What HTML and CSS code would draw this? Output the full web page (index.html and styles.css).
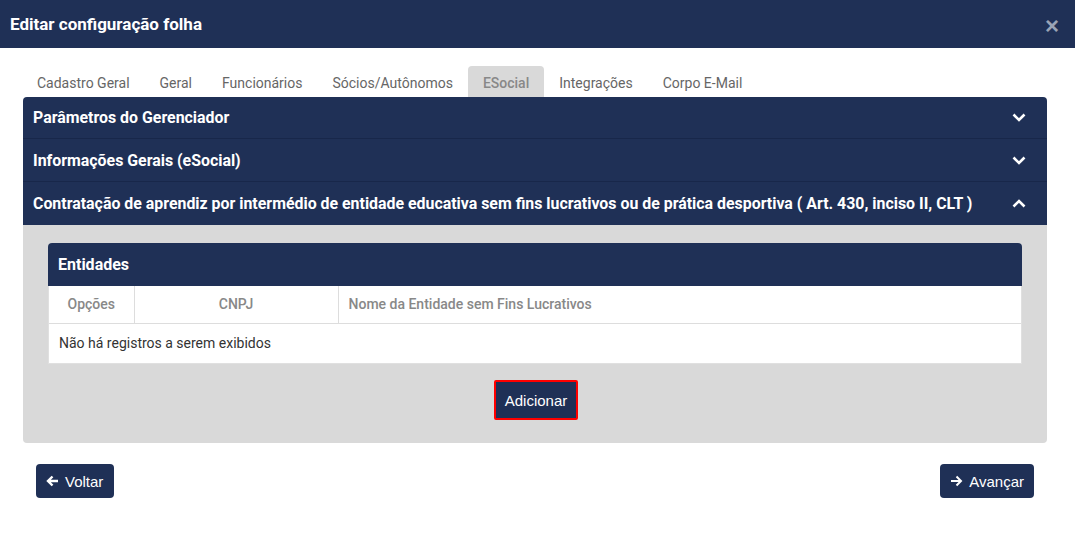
FILE: index.html
```html
<!DOCTYPE html>
<html lang="pt">
<head>
<meta charset="utf-8">
<title>Editar configuração folha</title>
<link rel="stylesheet" href="styles.css">
</head>
<body>
<div class="modal">
  <div class="modal-header">
    <h1 class="modal-title">Editar configuração folha</h1>
    <span class="close">&times;</span>
  </div>
  <div class="modal-body">
    <ul class="tabs">
      <li class="tab">Cadastro Geral</li>
      <li class="tab">Geral</li>
      <li class="tab">Funcionários</li>
      <li class="tab">Sócios/Autônomos</li>
      <li class="tab active">ESocial</li>
      <li class="tab">Integrações</li>
      <li class="tab">Corpo E-Mail</li>
    </ul>
    <div class="accordion">
      <div class="acc-head">
        <span>Parâmetros do Gerenciador</span>
        <svg class="chev" width="14" height="9" viewBox="0 0 14 9"><path d="M1.5 1.5 L7 7 L12.5 1.5" fill="none" stroke="#fff" stroke-width="2.6"/></svg>
      </div>
      <div class="acc-head">
        <span>Informações Gerais (eSocial)</span>
        <svg class="chev" width="14" height="9" viewBox="0 0 14 9"><path d="M1.5 1.5 L7 7 L12.5 1.5" fill="none" stroke="#fff" stroke-width="2.6"/></svg>
      </div>
      <div class="acc-head">
        <span>Contratação de aprendiz por intermédio de entidade educativa sem fins lucrativos ou de prática desportiva ( Art. 430, inciso II, CLT )</span>
        <svg class="chev" width="14" height="9" viewBox="0 0 14 9"><path d="M1.5 7.5 L7 2 L12.5 7.5" fill="none" stroke="#fff" stroke-width="2.6"/></svg>
      </div>
      <div class="acc-body">
        <div class="card">
          <div class="card-head">Entidades</div>
          <table class="grid">
            <thead>
              <tr>
                <th class="c-opt">Opções</th>
                <th class="c-cnpj">CNPJ</th>
                <th class="c-nome">Nome da Entidade sem Fins Lucrativos</th>
              </tr>
            </thead>
            <tbody>
              <tr><td colspan="3" class="empty">Não há registros a serem exibidos</td></tr>
            </tbody>
          </table>
        </div>
        <div class="add-row">
          <button class="btn btn-add">Adicionar</button>
        </div>
      </div>
    </div>
    <div class="footer">
      <button class="btn btn-nav btn-back">
        <svg width="13" height="12" viewBox="0 0 13 12"><path d="M12 6 H2.5 M6.5 1.5 L2 6 L6.5 10.5" fill="none" stroke="#fff" stroke-width="2.4"/></svg>
        Voltar
      </button>
      <button class="btn btn-nav">
        <svg width="13" height="12" viewBox="0 0 13 12"><path d="M1 6 H10.5 M6.5 1.5 L11 6 L6.5 10.5" fill="none" stroke="#fff" stroke-width="2"/></svg>
        Avançar
      </button>
    </div>
  </div>
</div>
</body>
</html>
```
FILE: styles.css
```css
* { box-sizing: border-box; }
html, body { margin: 0; padding: 0; background: #fff; }
body { font-family: Roboto, "Liberation Sans", Arial, sans-serif; color: #333; }

.modal { width: 1075px; height: 533px; background: #fff; }

.modal-header {
  height: 48px;
  background: #1f3056;
  display: flex;
  align-items: center;
  justify-content: space-between;
  padding: 0 10px 0 10px;
}
.modal-title { margin: 0; font-size: 17px; font-weight: 700; color: #fff; }
.close { color: #9aa3b5; font-size: 24px; font-weight: 700; line-height: 1; margin-top: 4px; font-family: "Liberation Sans", Arial, sans-serif; margin-right: 6px;}

.modal-body { padding: 18px 28px 0 23px; }

.tabs { list-style: none; margin: 0 0 0 -1px; padding: 0; display: flex; height: 31px; }
.tab {
  padding: 0 15px;
  height: 31px;
  line-height: 34px;
  font-size: 14px;
  color: #666;
  border-radius: 4px 4px 0 0;
}
.tab.active { background: #d9d9d9; color: #888; font-weight: 500; }

.accordion { width: 1024px; }
.acc-head {
  height: 43px;
  background: #1f3056;
  color: #fff;
  font-size: 15.9px;
  font-weight: 700;
  display: flex;
  align-items: center;
  justify-content: space-between;
  padding: 0 21px 0 10px;
  border-bottom: 1px solid #18274a;
}
.acc-head:first-child { border-radius: 4px 4px 0 0; height: 42px; }
.acc-head:nth-child(3) { border-bottom: 0; }
.chev { display: block; }

.acc-body {
  background: #d9d9d9;
  padding: 18px 25px 23px;
  border-radius: 0 0 4px 4px;
}
.card { background: #fff; border-radius: 4px 4px 0 0; border: 1px solid #e0e0e0; border-top: 0; }
.card-head {
  height: 43px;
  background: #1f3056;
  color: #fff;
  font-weight: 700;
  font-size: 16px;
  padding: 0 10px;
  display: flex;
  align-items: center;
  border-radius: 4px 4px 0 0;
  margin: 0 -1px;
}
.grid { width: 100%; border-collapse: collapse; font-size: 14px; }
.grid th {
  height: 37px;
  color: #888;
  font-weight: 500;
  border-bottom: 1px solid #ddd;
  border-right: 1px solid #ddd;
  padding: 0 10px;
}
.grid th:last-child { border-right: 0; }
.c-opt { width: 85px; text-align: center; }
.c-cnpj { width: 204px; text-align: center; }
.c-nome { text-align: left; }
.grid td.empty { height: 40px; padding: 0 10px; color: #333; }

.add-row { display: flex; justify-content: center; margin-top: 16px; padding-left: 2px; }
.btn {
  font-family: "Liberation Sans", Arial, sans-serif;
  background: #1f3056;
  color: #fff;
  border: 0;
  font-size: 15px;
  cursor: pointer;
}
.btn-add {
  height: 40px;
  width: 84px;
  border: 2px solid #ff0000;
  border-radius: 2px;
  padding: 0;
}

.footer { display: flex; justify-content: space-between; padding: 21px 13px 0 13px; width: 1024px; }
.btn-nav {
  height: 34px;
  padding: 0 10px;
  border-radius: 4px;
  display: flex;
  align-items: center;
  gap: 6px;
}
.btn-back { padding: 0 11px 0 10px; }
.btn-nav svg { display: block; }
```
